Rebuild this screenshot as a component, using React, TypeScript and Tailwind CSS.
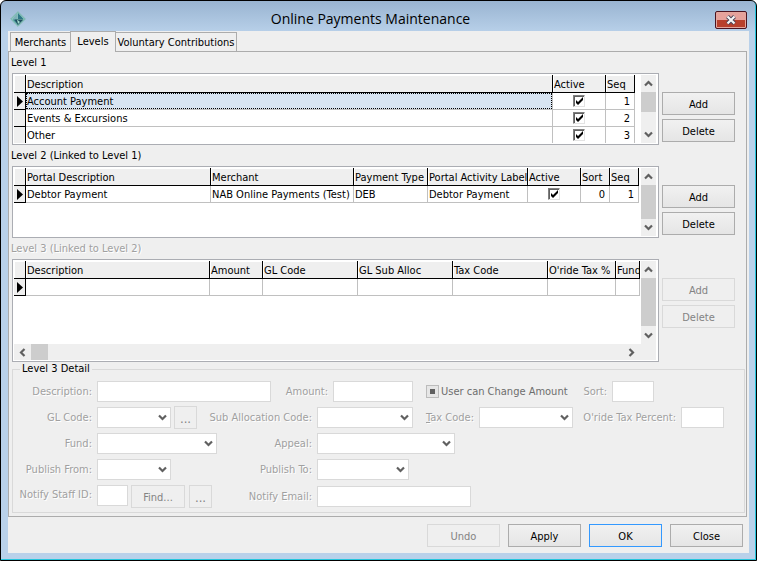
import React, { useEffect, useRef, useState } from 'react'

const tabs = [
  { name: 'Merchants', style: 'w-[60px] h-[19px] border-l border-t pt-px' },
  { name: 'Levels', style: 'relative w-[46px] h-[21px] border-x border-t -mb-px' },
  { name: 'Voluntary Contributions', style: 'w-[121px] h-[19px] border-r border-t pt-px' },
]

type Column = { label: string; width?: string; kind?: 'check' | 'number' }
type Cell = string | number | boolean

const levelOneColumns: Column[] = [
  { label: 'Description' },
  { label: 'Active', width: 'w-[53px]', kind: 'check' },
  { label: 'Seq', width: 'w-[29px]', kind: 'number' },
]

const levelOneRows: Cell[][] = [
  ['Account Payment', true, 1],
  ['Events & Excursions', true, 2],
  ['Other', true, 3],
]

const levelTwoColumns: Column[] = [
  { label: 'Portal Description' },
  { label: 'Merchant', width: 'w-[143px]' },
  { label: 'Payment Type', width: 'w-[74px]' },
  { label: 'Portal Activity Label', width: 'w-[100px]' },
  { label: 'Active', width: 'w-[53px]', kind: 'check' },
  { label: 'Sort', width: 'w-[29px]', kind: 'number' },
  { label: 'Seq', width: 'w-[29px]', kind: 'number' },
]

const levelTwoRows: Cell[][] = [
  ['Debtor Payment', 'NAB Online Payments (Test)', 'DEB', 'Debtor Payment', true, 0, 1],
]

const levelThreeColumns: Column[] = [
  { label: 'Description' },
  { label: 'Amount', width: 'w-[53px]' },
  { label: 'GL Code', width: 'w-[95px]' },
  { label: 'GL Sub Alloc', width: 'w-[95px]' },
  { label: 'Tax Code', width: 'w-[95px]' },
  { label: "O'ride Tax %", width: 'w-[68px]' },
  { label: 'Fund', width: 'w-[24px]' },
]

const levelThreeRows: Cell[][] = [['', '', '', '', '', '', '']]

const Chevron = ({ turn = '' }: { turn?: string }) => (
  <svg className={`block ${turn}`} width="9" height="9" viewBox="0 0 9 9" aria-hidden="true">
    <path d="M1 2.5 L4.5 6 L8 2.5" fill="none" stroke="#606060" strokeWidth="2.2" />
  </svg>
)

const Button = ({ children, className = 'w-[73px]', primary = false, disabled = false }: {
  children: React.ReactNode
  className?: string
  primary?: boolean
  disabled?: boolean
}) => {
  const look = disabled
    ? 'border-[#d9d9d9] bg-[#efefef] text-[#838383]'
    : primary
      ? 'border-[#3399ff] bg-linear-to-b from-[#f1f1f1] to-[#e5e5e5]'
      : 'border-[#acacac] bg-linear-to-b from-[#f1f1f1] to-[#e5e5e5]'
  return (
    <button
      type="button"
      disabled={disabled}
      className={`flex h-[23px] shrink-0 items-center justify-center border pt-0.5 ${look} ${className}`}
    >
      {children}
    </button>
  )
}

const GridCheck = ({ label, checked }: { label: string; checked: boolean }) => {
  const [on, setOn] = useState(checked)
  return (
    <span className="relative mx-auto block size-3">
      <input
        type="checkbox"
        aria-label={label}
        checked={on}
        onChange={() => setOn(!on)}
        className="block size-3 appearance-none border border-t-[#808080] border-l-[#808080] border-r-[#e3e3e3] border-b-[#e3e3e3] bg-white shadow-[inset_1px_1px_0_#606060]"
      />
      {on && (
        <svg className="pointer-events-none absolute top-0 left-0" width="12" height="12" viewBox="0 0 12 12" aria-hidden="true">
          <path d="M3 5 L5 7 L10 2 V5 L5 10 L3 8 Z" fill="#000" />
        </svg>
      )}
    </span>
  )
}

const DataTable = ({ name, columns, rows, selected = false }: {
  name: string
  columns: Column[]
  rows: Cell[][]
  selected?: boolean
}) => (
  <table aria-label={name} className="w-full table-fixed border-separate border-spacing-0">
    <colgroup>
      <col className="w-3" />
      {columns.map((c) => <col key={c.label} className={c.width} />)}
    </colgroup>
    <thead>
      <tr>
        <th className="h-[18px] border-r border-b border-black bg-[#efefef] p-0 shadow-[inset_1px_1px_0_#fff]" />
        {columns.map((c) => (
          <th
            key={c.label}
            className="h-[18px] overflow-hidden border-r border-b border-black bg-[#efefef] p-0 pt-0.5 pl-px text-left font-normal whitespace-nowrap shadow-[inset_1px_1px_0_#fff]"
          >
            {c.label}
          </th>
        ))}
      </tr>
    </thead>
    <tbody>
      {rows.map((row, r) => (
        <tr key={r}>
          <td className="h-[17px] border-r border-b border-black bg-[#efefef] p-0 pl-[3px]">
            {r === 0 && (
              <svg className="block" width="6" height="11" viewBox="0 0 6 11" aria-hidden="true">
                <path d="M0 0 L6 5.5 L0 11 Z" fill="#000" />
              </svg>
            )}
          </td>
          {row.map((cell, i) => {
            const active = selected && r === 0 && i === 0
            return (
              <td
                key={i}
                className={`h-[17px] overflow-hidden border-r border-b border-[#c0c0c0] p-0 whitespace-nowrap ${
                  columns[i].kind === 'number' ? 'pr-[3px] text-right' : ''
                } ${active ? 'bg-[#d8e4f1]' : ''}`}
              >
                {typeof cell === 'boolean' ? (
                  <GridCheck label={`${row[0]} active`} checked={cell} />
                ) : (
                  <div className={active ? 'h-4 border border-dotted border-black leading-4' : 'h-4 px-px leading-[18px]'}>
                    {cell}
                  </div>
                )}
              </td>
            )
          })}
        </tr>
      ))}
    </tbody>
  </table>
)

const VerticalBar = ({ thumb }: { thumb: string }) => (
  <div className="flex w-[15px] shrink-0 flex-col bg-[#efefef]">
    <button type="button" aria-label="Scroll up" className="flex h-[17px] items-center justify-center">
      <Chevron turn="rotate-180" />
    </button>
    <div className={`bg-[#cdcdcd] ${thumb}`} />
    <button type="button" aria-label="Scroll down" className="mt-auto flex h-[17px] items-center justify-center">
      <Chevron />
    </button>
  </div>
)

const HorizontalBar = () => (
  <div className="flex h-4 shrink-0 bg-[#efefef] pr-4">
    <button type="button" aria-label="Scroll left" className="flex w-[17px] items-center justify-center">
      <Chevron turn="rotate-90" />
    </button>
    <div className="w-[17px] bg-[#cdcdcd]" />
    <button type="button" aria-label="Scroll right" className="ml-auto flex w-[17px] items-center justify-center">
      <Chevron turn="-rotate-90" />
    </button>
  </div>
)

const Level = ({ title, height, inset, thumb, disabled = false, wide = false, children }: {
  title: string
  height: string
  inset: string
  thumb: string
  disabled?: boolean
  wide?: boolean
  children: React.ReactNode
}) => (
  <section>
    <h2 className={`-ml-px h-[21px] leading-[22px] ${disabled ? 'text-[#a0a0a0] [text-shadow:1px_1px_0_#fff]' : ''}`}>
      {title}
    </h2>
    <div className="flex gap-[3px] pr-2.5">
      <div className={`flex min-w-0 flex-1 flex-col border border-[#abadb3] bg-white py-px pr-0.5 pl-px ${height}`}>
        <div className="flex min-h-0 flex-1">
          <div className={`min-w-0 flex-1 overflow-hidden ${inset}`}>{children}</div>
          <VerticalBar thumb={thumb} />
        </div>
        {wide && <HorizontalBar />}
      </div>
      <div className="flex flex-col gap-1 pt-[19px]">
        <Button disabled={disabled}>Add</Button>
        <Button disabled={disabled}>Delete</Button>
      </div>
    </div>
  </section>
)

const Label = ({ id, width, children }: { id: string; width: string; children: React.ReactNode }) => (
  <label
    htmlFor={id}
    className={`mr-1 shrink-0 pr-px text-right whitespace-nowrap text-[#a0a0a0] [text-shadow:1px_1px_0_#fff] ${width}`}
  >
    {children}
  </label>
)

const TextBox = ({ id, width }: { id: string; width: string }) => (
  <input id={id} type="text" disabled className={`h-[21px] shrink-0 border border-[#d9d9d9] bg-white px-1 ${width}`} />
)

const Select = ({ id, width }: { id: string; width: string }) => (
  <span className={`relative block h-[21px] shrink-0 ${width}`}>
    <select id={id} disabled className="block h-full w-full appearance-none border border-[#d9d9d9] bg-white px-1 opacity-100">
      <option value="" />
    </select>
    <span className="pointer-events-none absolute top-1.5 right-1">
      <Chevron />
    </span>
  </span>
)

const Detail = () => {
  const changeRef = useRef<HTMLInputElement>(null)

  useEffect(() => {
    if (changeRef.current) changeRef.current.indeterminate = true
  }, [])

  return (
    <fieldset className="min-w-0 border border-[#d9d9d9] pb-1">
      <legend className="ml-[7px] px-0.5 leading-[14px]">Level 3 Detail</legend>
      <div className="flex flex-col gap-[5px] pt-[5px]">
        <div className="flex h-[21px] items-center">
          <Label id="description" width="w-20">Description:</Label>
          <TextBox id="description" width="w-[174px]" />
          <Label id="amount" width="w-[58px] pr-0.5">Amount:</Label>
          <TextBox id="amount" width="w-20" />
          <div className="ml-3 flex w-[148px] items-center gap-0.5 pl-px">
            <span className="relative block size-[13px] shrink-0">
              <input
                ref={changeRef}
                id="change-amount"
                type="checkbox"
                disabled
                className="block size-[13px] appearance-none border border-[#bcbcbc] bg-[#e6e6e6]"
              />
              <span className="pointer-events-none absolute top-1 left-1 size-[5px] bg-[#606060]" />
            </span>
            <label htmlFor="change-amount" className="pt-px whitespace-nowrap text-[#6d6d6d]">User can Change Amount</label>
          </div>
          <div className="ml-[7px] flex items-center">
            <Label id="sort" width="w-7">Sort:</Label>
            <TextBox id="sort" width="w-[42px]" />
          </div>
        </div>

        <div className="flex h-[21px] items-center">
          <div className="flex w-[196px] items-center">
            <Label id="gl-code" width="w-20">GL Code:</Label>
            <Select id="gl-code" width="w-[74px]" />
            <Button disabled className="ml-[3px] w-[23px] text-[13px]">...</Button>
          </div>
          <Label id="sub-allocation" width="w-[104px]">Sub Allocation Code:</Label>
          <Select id="sub-allocation" width="w-24" />
          <div className="ml-2.5 flex w-[150px] items-center">
            <Label id="tax-code" width="w-[52px]"><u>T</u>ax Code:</Label>
            <Select id="tax-code" width="w-[94px]" />
          </div>
          <div className="ml-[7px] flex items-center">
            <Label id="override-tax" width="w-[97px]">O'ride Tax Percent:</Label>
            <TextBox id="override-tax" width="w-[43px]" />
          </div>
        </div>

        <div className="flex h-[21px] items-center">
          <div className="flex w-[196px] items-center">
            <Label id="fund" width="w-20">Fund:</Label>
            <Select id="fund" width="w-[120px]" />
          </div>
          <Label id="appeal" width="w-[104px]">Appeal:</Label>
          <Select id="appeal" width="w-[138px]" />
        </div>

        <div className="flex h-[21px] items-center">
          <div className="flex w-[196px] items-center">
            <Label id="publish-from" width="w-20">Publish From:</Label>
            <Select id="publish-from" width="w-[74px]" />
          </div>
          <Label id="publish-to" width="w-[104px]">Publish To:</Label>
          <Select id="publish-to" width="w-[92px]" />
        </div>

        <div className="flex h-[23px] items-center">
          <div className="flex w-[196px] items-start">
            <Label id="staff-id" width="w-20 pt-[3px]">Notify Staff ID:</Label>
            <TextBox id="staff-id" width="w-[31px]" />
            <Button disabled className="ml-[3px] w-[54px]">Find...</Button>
            <Button disabled className="ml-1 w-[23px] text-[13px]">...</Button>
          </div>
          <Label id="notify-email" width="w-[104px]">Notify Email:</Label>
          <TextBox id="notify-email" width="w-[154px]" />
        </div>
      </div>
    </fieldset>
  )
}

const TitleBar = () => (
  <header className="flex h-[30px] items-center pr-0.5 pl-0.5">
    <svg className="mt-1.5 shrink-0" width="16" height="16" viewBox="0 0 16 16" aria-hidden="true">
      <path d="M8 0.7 L15.3 8 L8 15.3 L0.7 8 Z" fill="#8ccabf" stroke="#7ab5ac" />
      <path d="M7.5 2 V8 L2.5 8 Z" fill="#7fb0b8" />
      <path d="M8 2 L13.5 8 L8 8 Z" fill="#2f7886" />
      <path d="M2.5 8.5 H8 V14 Z" fill="#3f8a94" />
      <path d="M4.5 8.5 H13.5 L8 14 Z" fill="#1f4f5f" />
      <path d="M7 8.5 L10 11 L8 13 Z" fill="#a5dccf" />
    </svg>
    <h1 className="flex-1 pt-1.5 text-center font-['Open_Sans','Noto_Sans',sans-serif] text-[14px] leading-[22px]">
      Online Payments Maintenance
    </h1>
    <button
      type="button"
      aria-label="Close window"
      className="mt-2 flex h-[18px] w-8 shrink-0 items-center justify-center rounded-xs border border-[#4c1420] bg-linear-to-b from-[#e6a29b] from-50% to-[#b8402c] to-50% shadow-[inset_0_0_0_1px_#e3a79e]"
    >
      <svg width="12" height="10" viewBox="0 0 12 10" aria-hidden="true">
        <path d="M2.5 1.5 L9.5 8.5 M9.5 1.5 L2.5 8.5" stroke="#4a4658" strokeWidth="4" />
        <path d="M2.5 1.5 L9.5 8.5 M9.5 1.5 L2.5 8.5" stroke="#f6f6f6" strokeWidth="2.2" />
      </svg>
    </button>
  </header>
)

export default function App() {
  const [tab, setTab] = useState('Levels')

  return (
    <div className="flex min-h-screen flex-col rounded-t-md border border-black bg-[#b9d1ea] bg-linear-to-b from-[#99b4d1] to-[#b9d1ea] to-[32px] pr-[7px] pb-[7px] pl-[7px] font-['DejaVu_Sans_Condensed','Noto_Sans',sans-serif] text-[11px] leading-[14px] text-black shadow-[inset_-1px_-1px_0_#25c5dc]">
      <TitleBar />
      <main className="flex flex-1 flex-col bg-[#efefef]">
        <div role="tablist" className="flex items-end pl-0.5">
          {tabs.map((t) => (
            <button
              key={t.name}
              type="button"
              role="tab"
              aria-selected={tab === t.name}
              onClick={() => setTab(t.name)}
              className={`flex items-center justify-center border-[#acacac] bg-[#efefef] whitespace-nowrap ${t.style}`}
            >
              {t.name}
            </button>
          ))}
        </div>
        <div className="mr-0.5 flex-1 border border-[#acacac] pr-px pb-0.5 pl-[3px]">
          <Level title="Level 1" height="h-[72px]" inset="pr-1.5" thumb="h-5">
            <DataTable name="Level 1" columns={levelOneColumns} rows={levelOneRows} selected />
          </Level>
          <Level title="Level 2 (Linked to Level 1)" height="h-[72px]" inset="pr-0.5" thumb="h-[34px]">
            <DataTable name="Level 2" columns={levelTwoColumns} rows={levelTwoRows} />
          </Level>
          <Level title="Level 3 (Linked to Level 2)" height="h-[103px]" inset="pr-px" thumb="h-12" disabled wide>
            <DataTable name="Level 3" columns={levelThreeColumns} rows={levelThreeRows} />
          </Level>
          <Detail />
        </div>
        <footer className="flex justify-end gap-2 pt-[7px] pr-1.5 pb-1.5">
          <Button disabled>Undo</Button>
          <Button>Apply</Button>
          <Button primary>OK</Button>
          <Button>Close</Button>
        </footer>
      </main>
    </div>
  )
}
